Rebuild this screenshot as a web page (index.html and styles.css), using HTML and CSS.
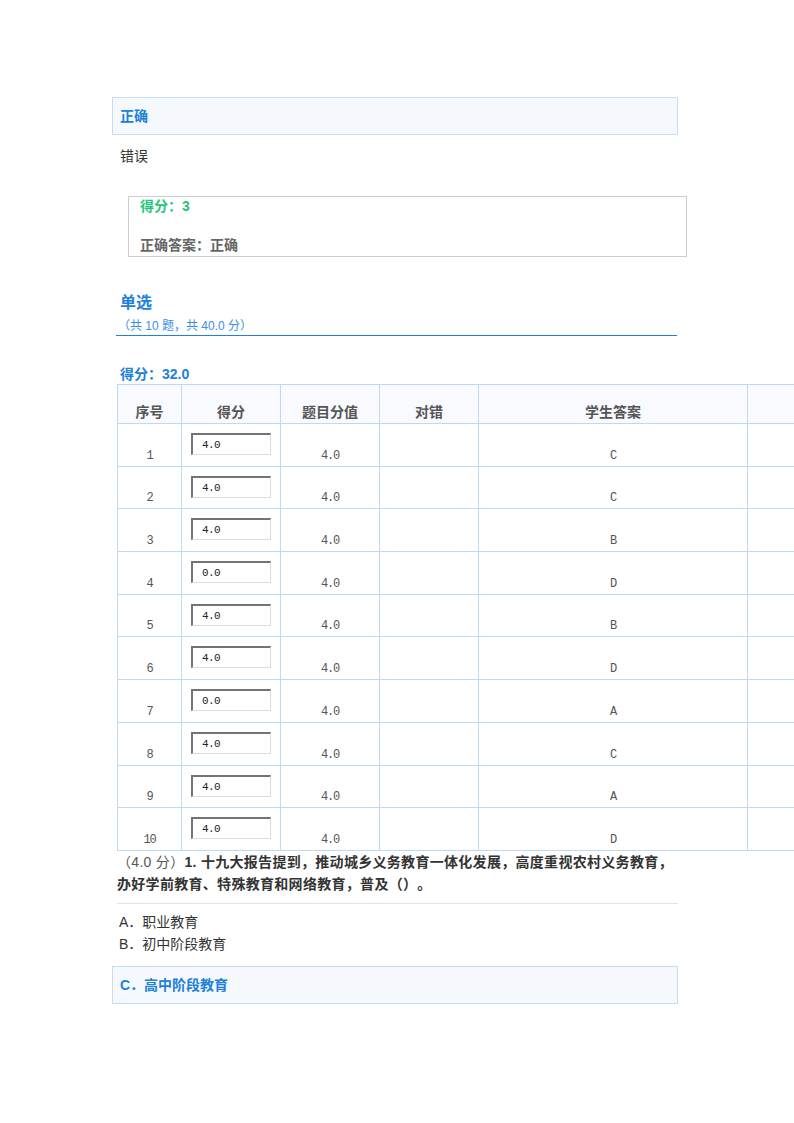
FILE: index.html
```html
<!DOCTYPE html>
<html>
<head>
    <meta charset="utf-8">
    <title>作业详情</title>
    <link rel="stylesheet" href="styles.css">
</head>
<body>
    <div class="page">
        <div class="content">
            <div class="option-box">正确</div>
            <div class="option-plain">错误</div>

            <div class="score-box">
                <div class="score-got">得分：3</div>
                <div class="score-answer">正确答案：正确</div>
            </div>

            <div class="section-head">
                <div class="section-title">单选</div>
                <div class="section-sub">（共 10 题，共 40.0 分）</div>
            </div>

            <div class="section-score">得分：32.0</div>

            <table class="score-table">
                <colgroup>
                    <col class="col-no">
                    <col class="col-mid">
                    <col class="col-mid">
                    <col class="col-mid">
                    <col class="col-answer">
                    <col class="col-more">
                </colgroup>
                <tr class="head-row">
                    <th>序号</th>
                    <th>得分</th>
                    <th>题目分值</th>
                    <th>对错</th>
                    <th>学生答案</th>
                    <th></th>
                </tr>
                <tr><td>1</td><td class="input-cell"><input class="score-input" type="text" value="4.0"></td><td>4.0</td><td></td><td>C</td><td></td></tr>
                <tr><td>2</td><td class="input-cell"><input class="score-input" type="text" value="4.0"></td><td>4.0</td><td></td><td>C</td><td></td></tr>
                <tr><td>3</td><td class="input-cell"><input class="score-input" type="text" value="4.0"></td><td>4.0</td><td></td><td>B</td><td></td></tr>
                <tr><td>4</td><td class="input-cell"><input class="score-input" type="text" value="0.0"></td><td>4.0</td><td></td><td>D</td><td></td></tr>
                <tr><td>5</td><td class="input-cell"><input class="score-input" type="text" value="4.0"></td><td>4.0</td><td></td><td>B</td><td></td></tr>
                <tr><td>6</td><td class="input-cell"><input class="score-input" type="text" value="4.0"></td><td>4.0</td><td></td><td>D</td><td></td></tr>
                <tr><td>7</td><td class="input-cell"><input class="score-input" type="text" value="0.0"></td><td>4.0</td><td></td><td>A</td><td></td></tr>
                <tr><td>8</td><td class="input-cell"><input class="score-input" type="text" value="4.0"></td><td>4.0</td><td></td><td>C</td><td></td></tr>
                <tr><td>9</td><td class="input-cell"><input class="score-input" type="text" value="4.0"></td><td>4.0</td><td></td><td>A</td><td></td></tr>
                <tr><td>10</td><td class="input-cell"><input class="score-input" type="text" value="4.0"></td><td>4.0</td><td></td><td>D</td><td></td></tr>
            </table>

            <div class="question">
                <span class="q-points">（4.0 分）</span><span class="q-text">1. 十九大报告提到，推动城乡义务教育一体化发展，高度重视农村义务教育，办好学前教育、特殊教育和网络教育，普及（）。</span>
            </div>

            <div class="choices">
                <div class="choice">A．职业教育</div>
                <div class="choice">B．初中阶段教育</div>
            </div>

            <div class="option-box choice-right">C．高中阶段教育</div>
        </div>
    </div>
</body>
</html>
```

FILE: styles.css
```css
html, body {
    margin: 0;
    padding: 0;
    background: #fff;
}
body {
    font-family: "Liberation Sans", "Noto Sans CJK SC", sans-serif;
    font-size: 14px;
    color: #333;
}
.page {
    width: 794px;
    height: 1123px;
    overflow: hidden;
}
.content {
    width: 566px;
    margin-left: 112px;
    padding-top: 97px;
}

/* answer options */
.option-box {
    box-sizing: border-box;
    height: 38px;
    line-height: 36px;
    padding-left: 7px;
    border: 1px solid #c4ddf3;
    background-color: #f5f9fe;
    color: #2180d8;
    font-weight: bold;
}
.option-plain {
    margin-top: 11px;
    padding-left: 8px;
    line-height: 20px;
}

/* score of the question */
.score-box {
    box-sizing: border-box;
    width: 559px;
    height: 61px;
    margin: 30px 0 0 16px;
    padding: 0 0 0 11px;
    border: 1px solid #cccccc;
    font-weight: bold;
    line-height: 18px;
}
.score-got {
    color: #1fc77c;
}
.score-answer {
    margin-top: 21px;
    color: #666;
}

/* section header */
.section-head {
    width: 561px;
    margin: 34px 0 0 4px;
    border-bottom: 1px solid #2180d8;
}
.section-title {
    padding-left: 4px;
    font-size: 16px;
    font-weight: bold;
    line-height: 24px;
    color: #2180d8;
}
.section-sub {
    margin-top: 3px;
    padding-left: 2px;
    font-size: 12px;
    line-height: 17px;
    color: #3a8ee6;
}
.section-score {
    margin-top: 28px;
    padding-left: 8px;
    line-height: 20px;
    font-weight: bold;
    color: #2180d8;
}

/* score table */
.score-table {
    margin-left: 5px;
    width: 731px;
    table-layout: fixed;
    border-collapse: collapse;
    text-align: center;
}
.col-no { width: 64px; }
.col-mid { width: 99px; }
.col-answer { width: 269px; }
.col-more { width: 100px; }
.score-table th,
.score-table td {
    border: 1px solid #bddaf3;
    padding: 0;
}
.score-table tr {
    height: 42.7px;
}
.score-table tr.head-row {
    height: 39px;
}
.head-row th {
    padding-bottom: 2px;
    vertical-align: bottom;
    background-color: #f8faff;
    color: #555;
    font-size: 14px;
    line-height: 18px;
}
.score-table td {
    padding-bottom: 3px;
    vertical-align: bottom;
    font-family: "Liberation Mono", "Noto Sans CJK SC", monospace;
    font-size: 12px;
    letter-spacing: -1.2px;
    line-height: 14px;
    color: #555;
}
.score-table td.input-cell {
    vertical-align: top;
    padding: 9px 0 0 0;
}
.score-input {
    box-sizing: border-box;
    display: block;
    width: 80px;
    height: 22px;
    margin-left: 9px;
    padding: 1px 0 0 9px;
    border-top: 2px solid #747474;
    border-left: 2px solid #747474;
    border-right: 1px solid #dcdcdc;
    border-bottom: 1px solid #dcdcdc;
    font-family: "Liberation Mono", monospace;
    font-size: 11px;
    letter-spacing: -0.6px;
    line-height: 13px;
    color: #222;
    outline: none;
}

/* question */
.question {
    width: 561px;
    margin-left: 5px;
    padding-bottom: 8px;
    border-bottom: 1px solid #e3e3e3;
    line-height: 22px;
    letter-spacing: 0.3px;
    text-spacing-trim: space-all;
}
.q-points {
    color: #555;
}
.q-text {
    font-weight: bold;
    color: #333;
}
.choices {
    margin-top: 7px;
    padding-left: 7px;
    line-height: 22px;
}
.choice-right {
    margin-top: 11px;
}
```
